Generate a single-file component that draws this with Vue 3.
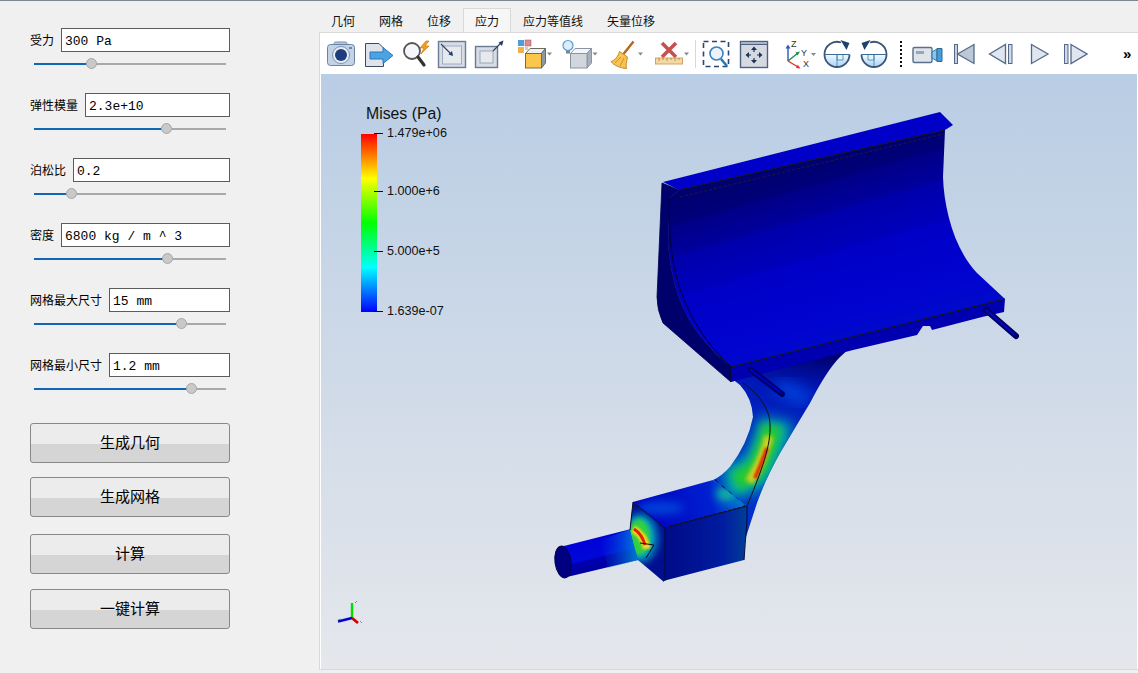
<script setup>
const rows = [
  { label: '受力', value: '300 Pa', pct: 29.5 },
  { label: '弹性模量', value: '2.3e+10', pct: 69 },
  { label: '泊松比', value: '0.2', pct: 19.5 },
  { label: '密度', value: '6800 kg / m ^ 3', pct: 69.5 },
  { label: '网格最大尺寸', value: '15 mm', pct: 76.5 },
  { label: '网格最小尺寸', value: '1.2 mm', pct: 82 }
]
const buttons = [
  { text: '生成几何', cls: 'b1' },
  { text: '生成网格', cls: 'b2' },
  { text: '计算', cls: 'b3' },
  { text: '一键计算', cls: 'b4' }
]
const tabs = ['几何', '网格', '位移', '应力', '应力等值线', '矢量位移']
const ticks = ['1.479e+06', '1.000e+6', '5.000e+5', '1.639e-07']
</script>

<template>
  <div class="app">
    <aside class="side">
      <div v-for="r in rows" :key="r.label" class="row">
        <div class="field">
          <label class="lbl">{{ r.label }}</label>
          <input class="inp" :value="r.value" />
        </div>
        <div class="slider">
          <div class="fill" :style="{ width: r.pct + '%' }"></div>
          <div class="knob" :style="{ left: r.pct + '%' }"></div>
        </div>
      </div>
      <button v-for="b in buttons" :key="b.text" class="btn" :class="b.cls">{{ b.text }}</button>
    </aside>

    <main class="main">
      <nav class="tabs">
        <div v-for="t in tabs" :key="t" class="tab" :class="{ on: t === '应力' }">{{ t }}</div>
      </nav>
      <div class="pane">
        <div class="toolbar">
          <!-- camera -->
          <svg class="ic m6" viewBox="0 0 30 30"><rect x="8" y="3" width="13" height="5" rx="1.5" fill="#b8c8dc" stroke="#7d93b0"/><rect x="1.5" y="5.5" width="27" height="21" rx="3" fill="#c3d2e6" stroke="#6a83a3"/><circle cx="15" cy="16" r="8.5" fill="#e8eef6" stroke="#7d93b0"/><circle cx="15" cy="16" r="6" fill="#1f3c7c"/><rect x="23" y="8" width="3" height="2" fill="#6f87a5"/></svg>
          <!-- doc arrow -->
          <svg class="ic m8" viewBox="0 0 30 30"><path d="M1.5 4.5H15L19.5 9V27.5H1.5Z" fill="#dfe4ec" stroke="#3c4a5c"/><path d="M6 13H19V8.5L29 16.5L19 24.500V20H6Z" fill="#4ba3e3" stroke="#2c77b8"/></svg>
          <!-- magnifier + lightning -->
          <svg class="ic m7" viewBox="0 0 30 30"><circle cx="11" cy="12" r="8" fill="#f4f6f9" stroke="#555" stroke-width="1.800"/><path d="M17 18L23 26" stroke="#333" stroke-width="3.200" stroke-linecap="round"/><path d="M25 2L19 9H23L20 15L28 7H24L28 2Z" fill="#f0a020" stroke="#d07a10" stroke-width=".7"/></svg>
          <!-- box arrow in -->
          <svg class="ic m6" viewBox="0 0 30 30"><rect x="1.500" y="2.500" width="27" height="26" fill="#d7dde6" stroke="#6b7b92" stroke-width="1.400"/><rect x="5.500" y="7" width="19" height="18" fill="#e6e9ee" stroke="#9eacc0"/><path d="M4 5L14 15" stroke="#2a3f62" stroke-width="1.100"/><path d="M16 17L11.500 15.500L15 12Z" fill="#1e3a6e"/></svg>
          <!-- box arrow out -->
          <svg class="ic m7" viewBox="0 0 30 30"><rect x="1.500" y="7.500" width="22" height="21" fill="#d7dde6" stroke="#6b7a90" stroke-width="1.400"/><rect x="6" y="12" width="13" height="12" fill="#e6e9ee" stroke="#9aa6b8"/><path d="M19 12L27 4" stroke="#2a3f62" stroke-width="1.100"/><path d="M29.500 1.500L28 7L24.500 3.500Z" fill="#1e3a6e"/></svg>
          <!-- colorize -->
          <svg class="ic w36 m12" viewBox="0 0 36 30"><rect x="2" y="1" width="6" height="6" fill="#4f9be0"/><rect x="9" y="1" width="6" height="6" fill="#d98a90" stroke="#b0606a" stroke-width=".6"/><rect x="2" y="8" width="6" height="6" fill="#f0b050"/><rect x="9" y="8" width="3" height="3" fill="#ccc"/><path d="M9.500 14.500L14 9.500H29.500L25.500 14.500Z" fill="#eef1f4" stroke="#6d6a60"/><path d="M25.500 14.500L29.500 9.500V24L25.500 29Z" fill="#8e97a6" stroke="#6d6a60"/><rect x="9.500" y="14.500" width="16" height="14.500" fill="#fcc64a" stroke="#6d6a60"/><path d="M31 13.500h5l-2.500 3z" fill="#888"/></svg>
          <!-- light -->
          <svg class="ic w38 m9" viewBox="0 0 38 30"><circle cx="7" cy="6.500" r="5" fill="#dcecfb" stroke="#5a9ad2" stroke-width="1.200"/><rect x="5" y="11.500" width="4" height="3" fill="#7a8490"/><path d="M9.500 14.500L14 9.500H30.500L26 14.500Z" fill="#f4f6f8" stroke="#8a94a4"/><path d="M26 14.500L30.500 9.500V24L26 29Z" fill="#a8b0bc" stroke="#8a94a4"/><rect x="9.500" y="14.500" width="16.500" height="14.500" fill="#d2d7de" stroke="#8a94a4"/><path d="M31.500 13.500h5l-2.500 3z" fill="#888"/></svg>
          <!-- broom -->
          <svg class="ic w38 m10" viewBox="0 0 38 30"><path d="M24.500 2.500L14.500 15" stroke="#b4651e" stroke-width="2.400"/><path d="M10.500 12.500L18.500 18C17.500 23 16.500 26 17.500 29.500C11 29 5 26.500 2 22.500C6 21.500 9 17.500 10.500 12.500Z" fill="#f8c350" stroke="#c58a2a"/><path d="M6 24L12 18M11 27L15 19" stroke="#c58a2a" stroke-width=".9"/><path d="M29 13.500h5l-2.500 3z" fill="#888"/></svg>
          <!-- ruler x -->
          <svg class="ic w38 m7" viewBox="0 0 38 30"><path d="M8 4L22 18M22 4L8 18" stroke="#c8504c" stroke-width="3.600"/><rect x="1.500" y="19" width="27" height="6" fill="#f6d8a4" stroke="#cca468"/><path d="M5 19v3M9 19v2M13 19v3M17 19v2M21 19v3M25 19v2" stroke="#a88440" stroke-width=".8"/><path d="M30 13.500h5l-2.500 3z" fill="#888"/></svg>
          <div class="sep"></div>
          <!-- zoom box -->
          <svg class="ic m5" viewBox="0 0 30 30"><rect x="2.500" y="2.500" width="25" height="25" fill="none" stroke="#29466e" stroke-width="1.600" stroke-dasharray="5 3.500"/><circle cx="15.500" cy="14.500" r="6.500" fill="#eaf2fb" stroke="#3d82bc" stroke-width="1.600"/><path d="M20 20L26 27" stroke="#2d78b4" stroke-width="2.600"/></svg>
          <!-- fit -->
          <svg class="ic m8" viewBox="0 0 30 30"><rect x="1.500" y="2.500" width="27" height="26" fill="#d5dae2" stroke="#4f6180" stroke-width="1.400"/><rect x="1.500" y="2.500" width="27" height="3" fill="#a9b4c4" stroke="#4f6180"/><path d="M15 9V23M8 16H22" stroke="#1f3352" stroke-width="1.200" stroke-dasharray="4 6 4"/><path d="M15 7.500l3 3.500h-6zM15 24.500l3-3.500h-6zM6.500 16l3.500-3v6zM23.500 16l-3.500-3v6z" fill="#1f3352"/></svg>
          <!-- axes -->
          <svg class="ic w34 m15" viewBox="0 0 34 30"><path d="M4 22V8" stroke="#2a56c0" stroke-width="1.400"/><path d="M4 5.500l-2.500 4h5z" fill="#2a56c0"/><path d="M4 22L14 14" stroke="#189048" stroke-width="1.400"/><path d="M16 12.500l-4.500 1 2 3z" fill="#189048"/><path d="M4 22L14 28" stroke="#e03030" stroke-width="1.400"/><path d="M16.500 29.500l-4.500-.5 1.800-3.200z" fill="#e03030"/><text x="7" y="8" class="ax">Z</text><text x="17" y="17" class="ax">Y</text><text x="19" y="28" class="ax">X</text><path d="M27 14h5l-2.500 3z" fill="#888"/></svg>
          <!-- rotate cw -->
          <svg class="ic m4" viewBox="0 0 30 30"><defs><linearGradient id="rotFill" x1="0" y1="0" x2="0" y2="1"><stop offset="0" stop-color="#f4fafe"/><stop offset="1" stop-color="#a8d4f2"/></linearGradient></defs><path d="M2.500 15.500H27.500A12.500 12.500 0 0 1 2.500 15.500Z" fill="url(#rotFill)"/><path d="M15 15.500H21V21H15Z" fill="#e4f2fc" stroke="#3a7fb4" stroke-width=".8"/><path d="M15 15.500V28" stroke="#3a7fb4" stroke-width=".8"/><path d="M19 3.500A12.500 12.500 0 0 0 2.500 15.500A12.500 12.500 0 0 0 27.500 15.500" fill="none" stroke="#3c5478" stroke-width="1.800"/><path d="M2.500 15.500H27.500" stroke="#3c6a98" stroke-width="1"/><path d="M18.500 1L27.500 4L24.500 11Z" fill="#22406e"/></svg>
          <!-- rotate ccw -->
          <svg class="ic m7" viewBox="0 0 30 30"><path d="M2.500 15.500H27.500A12.500 12.500 0 0 1 2.500 15.500Z" fill="url(#rotFill)"/><path d="M15 15.500H9V21H15Z" fill="#e4f2fc" stroke="#3a7fb4" stroke-width=".8"/><path d="M15 15.500V28" stroke="#3a7fb4" stroke-width=".8"/><path d="M11 3.500A12.500 12.500 0 0 1 27.500 15.500A12.500 12.500 0 0 1 2.500 15.500" fill="none" stroke="#3c5478" stroke-width="1.800"/><path d="M2.500 15.500H27.500" stroke="#3c6a98" stroke-width="1"/><path d="M11.500 1L2.500 4L5.500 11Z" fill="#22406e"/></svg>
          <div class="dots"></div>
          <!-- video camera -->
          <svg class="ic w32 m9" viewBox="0 0 32 30"><rect x="2" y="8.500" width="19" height="15" rx="1.500" fill="#dfe4ea" stroke="#58708e" stroke-width="1.400"/><rect x="5" y="12" width="8" height="3" fill="#9aa6b4"/><path d="M21 13L26 10V22L21 19Z" fill="#88c4ec" stroke="#2f78b0"/><path d="M26 9.500H31V22.500H26Z" fill="#4a9ad4" stroke="#2f6a9c"/></svg>
          <!-- first -->
          <svg class="ic w26 m8" viewBox="0 0 26 30"><rect x="3.500" y="5.500" width="3" height="19" fill="#c4cfde" stroke="#55698a"/><path d="M6.500 15L23 5.500V24.500Z" fill="#bcc8d8" stroke="#55698a" stroke-width="1.300"/></svg>
          <!-- prev -->
          <svg class="ic w26 m11" viewBox="0 0 26 30"><path d="M1.500 15L17.500 5.500V24.500Z" fill="#dfe6f0" stroke="#55698a" stroke-width="1.300"/><rect x="20.500" y="5.500" width="3.500" height="19" fill="#d0d8e4" stroke="#55698a"/></svg>
          <!-- play -->
          <svg class="ic w24 m13" viewBox="0 0 24 30"><path d="M4.500 5.500L21 15L4.500 24.500Z" fill="#dfe6f0" stroke="#55698a" stroke-width="1.300"/></svg>
          <!-- next -->
          <svg class="ic w26 m11" viewBox="0 0 26 30"><rect x="2.500" y="5.500" width="3.500" height="19" fill="#d0d8e4" stroke="#55698a"/><path d="M9 5.500L25 15L9 24.500Z" fill="#dfe6f0" stroke="#55698a" stroke-width="1.300"/></svg>
          <span class="more">»</span>
        </div>

        <div class="view">
          <svg class="scene" viewBox="321 74 815 595" width="815" height="595">
            <defs>
              <linearGradient id="surf" gradientUnits="userSpaceOnUse" x1="800" y1="150" x2="860" y2="360">
                <stop offset="0" stop-color="#00006e"/>
                <stop offset=".16" stop-color="#000078"/>
                <stop offset=".18" stop-color="#000088"/>
                <stop offset=".3" stop-color="#00009c"/>
                <stop offset=".32" stop-color="#0000ac"/>
                <stop offset=".48" stop-color="#0000bc"/>
                <stop offset=".5" stop-color="#0000c6"/>
                <stop offset=".8" stop-color="#0004d0"/>
                <stop offset="1" stop-color="#0010c4"/>
              </linearGradient>
              <linearGradient id="neck" gradientUnits="userSpaceOnUse" x1="790" y1="350" x2="770" y2="470">
                <stop offset="0" stop-color="#000070"/>
                <stop offset=".3" stop-color="#0018b8"/>
                <stop offset="1" stop-color="#0030c8"/>
              </linearGradient>
              <linearGradient id="boxTop" gradientUnits="userSpaceOnUse" x1="640" y1="510" x2="740" y2="490">
                <stop offset="0" stop-color="#0000c0"/>
                <stop offset=".7" stop-color="#0020d0"/>
                <stop offset="1" stop-color="#0078d0"/>
              </linearGradient>
              <linearGradient id="boxFront" gradientUnits="userSpaceOnUse" x1="670" y1="540" x2="745" y2="540">
                <stop offset="0" stop-color="#000c88"/>
                <stop offset=".7" stop-color="#001ca0"/>
                <stop offset="1" stop-color="#003c98"/>
              </linearGradient>
              <linearGradient id="cyl" gradientUnits="userSpaceOnUse" x1="590" y1="535" x2="600" y2="575">
                <stop offset="0" stop-color="#0000d8"/>
                <stop offset=".55" stop-color="#0008d8"/>
                <stop offset=".6" stop-color="#0000b0"/>
                <stop offset="1" stop-color="#000098"/>
              </linearGradient>
              <linearGradient id="cylHot" gradientUnits="userSpaceOnUse" x1="600" y1="0" x2="635" y2="0">
                <stop offset="0" stop-color="#0060e0" stop-opacity="0"/>
                <stop offset="1" stop-color="#00a0e0"/>
              </linearGradient>
              <filter id="b2" x="-50%" y="-50%" width="200%" height="200%"><feGaussianBlur stdDeviation="2"/></filter>
              <filter id="b1" x="-50%" y="-50%" width="200%" height="200%"><feGaussianBlur stdDeviation="1"/></filter>
              <filter id="b4" x="-50%" y="-50%" width="200%" height="200%"><feGaussianBlur stdDeviation="4"/></filter>
              <filter id="b7" x="-50%" y="-50%" width="200%" height="200%"><feGaussianBlur stdDeviation="7"/></filter>
              <clipPath id="neckClip"><path d="M731 378L853 345L840 357Q827 370 810 403L780 453Q765 480 757 503L745 540L744 562L745 506L713 480Q722 476 730 467Q748 443 753 417Q752 398 740 385Z"/></clipPath>
              <clipPath id="boxLeft"><path d="M633 502L666 528L664 582L638 560L630 530Z"/></clipPath>
              <clipPath id="boxT"><path d="M633 502L713 480L747 506L665 528Z"/></clipPath>
            </defs>

            <!-- neck -->
            <path d="M731 378L853 345L840 357Q827 370 810 403L780 453Q765 480 757 503L745 540L744 562L745 506L713 480Q722 476 730 467Q748 443 753 417Q752 398 740 385Z" fill="url(#neck)"/>
            <g clip-path="url(#neckClip)">
              <path d="M778 385Q795 395 808 400" stroke="#0040d8" stroke-width="16" fill="none" filter="url(#b7)"/>
              <path d="M725 482Q745 480 757 470Q772 445 776 420" stroke="#00b0b0" stroke-width="34" fill="none" filter="url(#b7)"/>
              <path d="M735 482Q748 476 757 468Q769 445 772 425" stroke="#20c830" stroke-width="20" fill="none" filter="url(#b4)"/>
              <path d="M749 482Q757 470 763 455Q767 445 769 436" stroke="#d0d020" stroke-width="9" fill="none" filter="url(#b2)"/>
              <path d="M755 478Q761 465 767 448" stroke="#e03000" stroke-width="4" fill="none" filter="url(#b1)"/>
              <path d="M743 383C760 395 770 410 770 425C771 445 762 470 747 506" fill="none" stroke="#111" stroke-width="1"/>
              <path d="M715 480L745 505" fill="none" stroke="#111" stroke-width="1" stroke-dasharray="4 5"/>
            </g>

            <!-- left dark outer -->
            <path d="M662 183L679 190L670 198L668 240C672 310 700 340 731 367V382L663 323Q657 310 657 297Z" fill="#00006c" stroke="#00004c" stroke-width=".8"/>
            <!-- main curved surface -->
            <path d="M670 198L679 190L945 130L943 177C944 210 955 250 977 273L1005 299L731 367C700 340 672 310 668 240Z" fill="url(#surf)"/>
            <path d="M670 198C666 260 680 320 731 367" fill="none" stroke="#000030" stroke-width="1"/>
            <!-- top strip -->
            <path d="M663 182L940 112L953 125L945 130L679 190Z" fill="#0000c8"/>
            <path d="M679 190L945 130" stroke="#111" stroke-width="1"/>
            <path d="M680 197L943 134" stroke="#222" stroke-width=".8" stroke-dasharray="3 2"/>
            <!-- front face -->
            <path d="M731 367L1005 299L1004 312L982 317L932 330L930 326L923 326L917 335L853 350L731 382Z" fill="#0000b0"/>
            <path d="M731 367L1005 299" stroke="#111" stroke-width="1.100"/>
            <path d="M731 367V382" stroke="#111" stroke-width="1"/>
            <!-- pins -->
            <path d="M751 370L782 394" stroke="#000060" stroke-width="6" stroke-linecap="round"/>
            <path d="M751 370L780 392" stroke="#0000c0" stroke-width="2.200" stroke-linecap="round"/>
            <path d="M986 310L1016 336" stroke="#000060" stroke-width="6" stroke-linecap="round"/>
            <path d="M986 310L1014 334" stroke="#0008c8" stroke-width="2.200" stroke-linecap="round"/>

            <!-- cylinder -->
            <path d="M560 547L631 529L638 560L567 577Z" fill="url(#cyl)"/>
            <path d="M600 540L631 529L638 560L608 568Z" fill="url(#cylHot)" opacity=".7"/>
            <ellipse cx="563" cy="562" rx="8" ry="16" transform="rotate(-8 563 562)" fill="#000080" stroke="#00004c"/>

            <!-- box -->
            <path d="M633 502L666 528L664 582L638 560L630 530Z" fill="#000e90"/>
            <g clip-path="url(#boxLeft)">
              <ellipse cx="640" cy="538" rx="17" ry="24" fill="#00a8c8" filter="url(#b4)"/>
              <ellipse cx="639" cy="537" rx="11" ry="18" fill="#30d040" filter="url(#b2)"/>
              <path d="M633 529Q644 535 647 549" stroke="#e8d820" stroke-width="8" fill="none" filter="url(#b1)"/>
              <path d="M634 529Q642 534 645 545" stroke="#e82000" stroke-width="3" fill="none"/>
              <path d="M640 543L654 545L646 558" fill="none" stroke="#111" stroke-width="1"/>
            </g>
            <path d="M633 502L713 480L747 506L665 528Z" fill="url(#boxTop)"/>
            <g clip-path="url(#boxT)">
              <ellipse cx="726" cy="494" rx="10" ry="7" fill="#10b8a0" filter="url(#b4)"/>
              <ellipse cx="660" cy="508" rx="24" ry="7" fill="#0040d8" filter="url(#b4)"/>
            </g>
            <path d="M665 528L747 506L744 560L663 581Z" fill="url(#boxFront)"/>
            <path d="M633 502L665 528V581M665 528L747 506V520L744 560" fill="none" stroke="#0a0a30" stroke-width="1"/>
            <path d="M670 526L742 507L747 504" fill="none" stroke="#111" stroke-width="1" stroke-dasharray="3 2"/>
            <path d="M633 502L630 530" stroke="#0a0a30" stroke-width="1"/>

            <!-- orientation axes -->
            <path d="M352 618L352 603" stroke="#00e000" stroke-width="2.400"/>
            <path d="M352 618L338 621.500" stroke="#0000d8" stroke-width="2.400"/>
            <path d="M352 618L358 623" stroke="#d00000" stroke-width="2.800"/>
            <path d="M355 603l2-2M338 620l3-1M360 621l2 2" stroke="#40a040" stroke-width=".8"/>
          </svg>

          <div class="legend">
            <div class="title">Mises (Pa)</div>
            <div class="bar"></div>
            <div v-for="(t, i) in ticks" :key="t" class="tick" :class="'t' + i"><i></i><span>{{ t }}</span></div>
          </div>
        </div>
      </div>
    </main>
  </div>
</template>

<style scoped>
.app { width: 1138px; height: 673px; box-sizing: border-box; border-top: 1px solid #80868e; background: #f0f0f0; display: flex; overflow: hidden; font-family: "Noto Sans CJK SC", "Liberation Sans", sans-serif; color: #000; }
.side { width: 319px; flex: none; box-sizing: border-box; padding: 27px 0 0 30px; display: flex; flex-direction: column; align-items: flex-start; }
.row { width: 200px; height: 65px; }
.field { display: flex; align-items: center; gap: 7px; height: 24px; }
.lbl { font-size: 12px; line-height: 24px; white-space: nowrap; margin-top: -1px; }
.inp { flex: 1; min-width: 0; height: 24px; box-sizing: border-box; border: 1px solid #5c5c5c; background: #fff; padding: 2px 3px 0; margin: 0; font: 13px "Liberation Mono", "DejaVu Sans Mono", monospace; color: #000; outline: none; }
.slider { position: relative; width: 192px; height: 2px; margin: 11px 0 0 4px; background: #a9a9a9; }
.fill { height: 2px; background: #0f67b5; }
.knob { position: absolute; top: -5px; width: 11px; height: 11px; margin-left: -5px; box-sizing: border-box; border-radius: 50%; background: #c9c9c9; border: 1px solid #a8a8a8; }
.btn { width: 200px; height: 40px; box-sizing: border-box; flex: none; border: 1px solid #888; border-radius: 3px; background: linear-gradient(#ececec 0, #ececec 20px, #d5d5d5 20px, #d5d5d5 100%); font: 15px "Noto Sans CJK SC", sans-serif; color: #000; padding: 0 0 3px; }
.b1 { margin-top: 5px; }
.b2 { margin-top: 14px; }
.b3 { margin-top: 17px; }
.b4 { margin-top: 15px; }
.main { flex: 1; min-width: 0; display: flex; flex-direction: column; }
.tabs { height: 24px; margin-top: 7px; display: flex; flex: none; box-sizing: border-box; }
.tab { padding: 0 11px; font-size: 12px; line-height: 24px; color: #111; box-sizing: border-box; border: 1px solid transparent; border-bottom: 0; }
.tab.on { background: #f6f6f6; border-color: #d9d9d9; }
.pane { flex: 1; min-height: 0; margin-bottom: 3px; border-top: 1px solid #d9d9d9; border-left: 1px solid #d9d9d9; border-bottom: 1px solid #d9d9d9; display: flex; flex-direction: column; background: #fff; }
.toolbar { height: 41px; flex: none; display: flex; align-items: center; background: #fff; padding-top: 1px; box-sizing: border-box; }
.ic { width: 30px; height: 30px; flex: none; display: block; }
.w24 { width: 24px; }
.w26 { width: 26px; }
.w32 { width: 32px; }
.w34 { width: 34px; }
.w36 { width: 36px; }
.w38 { width: 38px; }
.m4 { margin-left: 4px; }
.m5 { margin-left: 5px; }
.m6 { margin-left: 6px; }
.m7 { margin-left: 7px; }
.m8 { margin-left: 8px; }
.m9 { margin-left: 9px; }
.m10 { margin-left: 10px; }
.m11 { margin-left: 11px; }
.m12 { margin-left: 12px; }
.m13 { margin-left: 13px; }
.m15 { margin-left: 15px; }
.ax { font: 9px "Liberation Sans", sans-serif; fill: #333; }
.sep { width: 1px; height: 28px; background: #d8d8d8; margin-left: 3px; flex: none; }
.dots { width: 2px; height: 26px; margin-left: 11px; flex: none; background: repeating-linear-gradient(#111 0 2px, transparent 2px 4px); }
.more { margin-left: 35px; font: bold 15px "Liberation Sans", sans-serif; line-height: 30px; }
.view { flex: 1; min-height: 0; position: relative; margin: 0 1px 0 1px; overflow: hidden; background: linear-gradient(#b9cde4, #e5e7ec); }
.scene { position: absolute; left: 0; top: 0; display: block; }
.legend { position: absolute; left: 0; top: 0; font-family: "Liberation Sans", sans-serif; color: #111; }
.title { position: absolute; left: 45px; top: 31px; font-size: 15.800px; line-height: 18px; white-space: nowrap; }
.bar { position: absolute; left: 40px; top: 60px; width: 16px; height: 178px; background: linear-gradient(#ff0000, #ffff00 25%, #00ff00 50%, #00ffff 75%, #0000ff); }
.tick { position: absolute; left: 53px; height: 14px; display: flex; align-items: center; white-space: nowrap; font-size: 12.600px; }
.tick i { display: block; width: 9px; height: 1px; background: #111; margin-right: 4px; }
.tick span { margin-top: -1px; }
.t0 { top: 52px; }
.t1 { top: 110px; }
.t2 { top: 170px; }
.t3 { top: 230px; }
</style>

<style>
html, body { margin: 0; background: #f0f0f0; }
</style>
